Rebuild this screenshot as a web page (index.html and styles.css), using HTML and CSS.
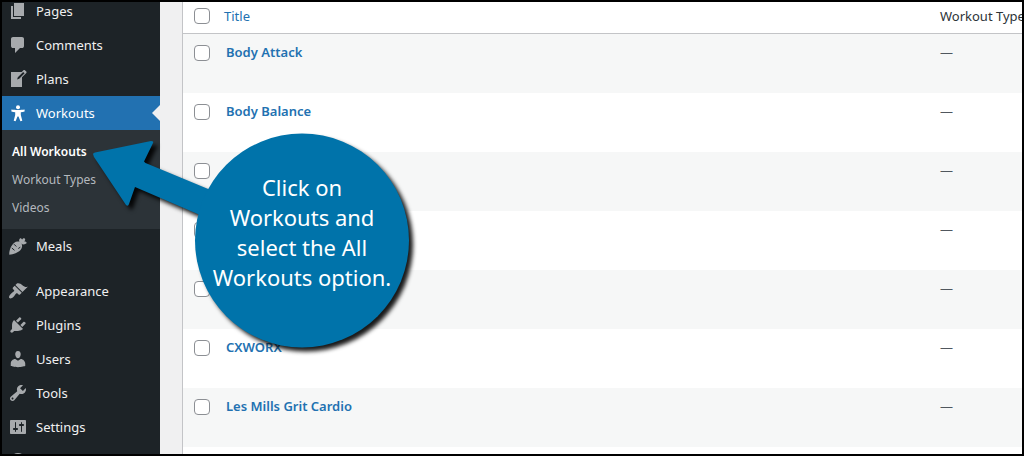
FILE: index.html
```html
<!DOCTYPE html>
<html lang="en">

<head>
    <meta charset="UTF-8">
    <title>Workouts</title>
    <link rel="stylesheet" href="styles.css">
</head>

<body>
    <nav class="sidebar">
        <ul class="menu">
            <li><a href="#"><svg class="icon" viewBox="0 0 20 20"><path d="M6 15V2h10v13H6zm-1 1h8v2H3V5h2v11z"/></svg>Pages</a></li>
            <li><a href="#"><svg class="icon" viewBox="0 0 20 20"><path d="M5 2h9q.82 0 1.41.59T16 4v7q0 .82-.59 1.41T14 13h-2l-5 5v-5H5q-.82 0-1.41-.59T3 11V4q0-.82.59-1.41T5 2z"/></svg>Comments</a></li>
            <li><a href="#"><svg class="icon" viewBox="0 0 20 20"><path d="M16.890 1.200l1.410 1.410c.39.39.39 1.020 0 1.410L14 8.330V18H3V3h10.670l1.800-1.800c.4-.39 1.030-.4 1.420 0zm-5.660 8.480l5.370-5.360-1.420-1.420-5.360 5.370-.71 2.120z"/></svg>Plans</a></li>
            <li>
                <a class="current" href="#"><svg class="icon" viewBox="0 0 20 20"><circle cx="10" cy="4.300" r="2"/><path d="M3.400 6.600c2 .3 4 .4 6.600.4s4.600-.1 6.600-.4v2c-1.300.3-2.600.5-3.800.7v2.600l1.500 5.900-1.900.4L10.500 13.500h-1l-1.900 4.700-1.900-.4 1.500-5.900V9.300C6 9.100 4.700 8.900 3.400 8.600z"/></svg>Workouts</a>
                <ul class="submenu">
                    <li><a class="selected" href="#">All Workouts</a></li>
                    <li><a href="#">Workout Types</a></li>
                    <li><a href="#">Videos</a></li>
                </ul>
            </li>
            <li><a href="#"><svg class="icon" viewBox="0 0 20 20"><path d="M1.300 18.700C1 14.500 3.200 9.200 6 7c2.300-1.900 5.300-1.900 7 0s1.500 4.900-.5 7c-2.400 2.500-7 4.600-11.200 4.700z"/><path d="M11.800 6.600c-1-1.500-.9-3.400.3-4.400 1-.1 1.800.5 2 1.500.5-1.300 1.600-1.900 2.600-1.200.8.700.6 1.900-.4 2.900 1.300-.1 2.300.5 2.500 1.700-1.400 1.500-4 1.600-5.500.7z"/><path class="cut" d="M6 8.200l2.300 2.300M12.300 11.200l-2 1.300M3.800 12l2.700 2.300"/></svg>Meals</a></li>
            <li class="separator"></li>
            <li><a href="#"><svg class="icon" viewBox="0 0 20 20"><path d="M14.480 11.060L7.410 3.990l1.500-1.500c.5-.56 2.300-.47 3.510.32 1.210.8 1.430 1.280 2.910 2.100 1.180.64 2.450 1.260 4.450.85zm-.71.71L6.700 4.700 4.930 6.470c-.39.39-.39 1.020 0 1.410l1.060 1.060c.39.39.39 1.030 0 1.420-.6.6-1.430 1.110-2.210 1.690-.35.26-.7.53-1.010.84C1.430 14.230.4 16.080 1.400 17.070c.99 1 2.840-.03 4.180-1.360.31-.31.58-.66.85-1.020.57-.78 1.080-1.610 1.690-2.210.39-.39 1.020-.39 1.410 0l1.060 1.060c.39.39 1.020.39 1.410 0z"/></svg>Appearance</a></li>
            <li><a href="#"><svg class="icon" viewBox="0 0 20 20"><path d="M13.110 4.360L9.870 7.600 8 5.730l3.240-3.240c.35-.34 1.050-.2 1.560.32.52.51.66 1.210.31 1.550zm-8 1.770l.91-1.120 9.010 9.010-1.190.84c-.71.71-2.630 1.160-3.820 1.160H6.140L4.900 17.260c-.59.59-1.540.59-2.120 0-.59-.58-.59-1.530 0-2.120l1.240-1.240v-3.880c0-1.130.4-3.190 1.090-3.890zm7.260 3.970l3.240-3.240c.34-.35 1.040-.21 1.550.31.52.51.66 1.210.31 1.550l-3.240 3.250z"/></svg>Plugins</a></li>
            <li><a href="#"><svg class="icon" viewBox="0 0 20 20"><path d="M10 9.250c-2.270 0-2.730-3.440-2.730-3.440C7 4.020 7.820 2 9.970 2c2.160 0 2.980 2.020 2.710 3.810 0 0-.41 3.440-2.680 3.440zm0 2.570L12.720 10c2.390 0 4.520 2.330 4.520 4.530v2.490s-3.650 1.130-7.240 1.130c-3.650 0-7.240-1.130-7.240-1.130v-2.490c0-2.250 1.940-4.480 4.470-4.480z"/></svg>Users</a></li>
            <li><a href="#"><svg class="icon" viewBox="0 0 20 20"><path d="M16.680 9.770c-1.340 1.340-3.300 1.670-4.950.99l-5.410 6.520c-.99.99-2.590.99-3.580 0s-.99-2.590 0-3.570l6.520-5.420c-.68-1.650-.35-3.610.99-4.950 1.280-1.280 3.120-1.620 4.720-1.060l-2.890 2.890 2.820 2.820 2.860-2.870c.53 1.580.18 3.390-1.080 4.650zM3.810 16.210c.4.39 1.040.39 1.430 0 .4-.4.4-1.040 0-1.430-.39-.4-1.030-.4-1.430 0-.39.39-.39 1.030 0 1.430z"/></svg>Tools</a></li>
            <li><a href="#"><svg class="icon" viewBox="0 0 20 20"><path d="M18 16V4c0-.55-.45-1-1-1H3c-.55 0-1 .45-1 1v12c0 .55.45 1 1 1h14c.55 0 1-.45 1-1zM8 11h1c.55 0 1 .45 1 1s-.45 1-1 1H8v1.500c0 .28-.22.5-.5.5s-.5-.22-.5-.5V13H6c-.55 0-1-.45-1-1s.45-1 1-1h1V5.500c0-.28.22-.5.5-.5s.5.22.5.5V11zm5-2h-1c-.55 0-1-.45-1-1s.45-1 1-1h1V5.500c0-.28.22-.5.5-.5s.5.22.5.5V7h1c.55 0 1 .45 1 1s-.45 1-1 1h-1v5.500c0 .28-.22.5-.5.5s-.5-.22-.5-.5V9z"/></svg>Settings</a></li>
            <li><a href="#" aria-label="More"><svg class="icon" viewBox="0 0 20 20"><circle cx="10" cy="10" r="8"/></svg></a></li>
        </ul>
    </nav>

    <main class="content">
        <table class="list">
            <thead>
                <tr>
                    <th class="check"><input type="checkbox" aria-label="Select all"></th>
                    <th class="heading"><a href="#">Title</a></th>
                    <th class="types">Workout Types</th>
                </tr>
            </thead>
            <tbody>
                <tr>
                    <td class="check"><input type="checkbox" id="w1"></td>
                    <td class="name"><label for="w1"><a href="#">Body Attack</a></label></td>
                    <td class="types">—</td>
                </tr>
                <tr>
                    <td class="check"><input type="checkbox" id="w2"></td>
                    <td class="name"><label for="w2"><a href="#">Body Balance</a></label></td>
                    <td class="types">—</td>
                </tr>
                <tr>
                    <td class="check"><input type="checkbox" aria-label="Select workout"></td>
                    <td class="name"></td>
                    <td class="types">—</td>
                </tr>
                <tr>
                    <td class="check"><input type="checkbox" aria-label="Select workout"></td>
                    <td class="name"></td>
                    <td class="types">—</td>
                </tr>
                <tr>
                    <td class="check"><input type="checkbox" aria-label="Select workout"></td>
                    <td class="name"></td>
                    <td class="types">—</td>
                </tr>
                <tr>
                    <td class="check"><input type="checkbox" id="w6"></td>
                    <td class="name"><label for="w6"><a href="#">CXWORX</a></label></td>
                    <td class="types">—</td>
                </tr>
                <tr>
                    <td class="check"><input type="checkbox" id="w7"></td>
                    <td class="name"><label for="w7"><a href="#">Les Mills Grit Cardio</a></label></td>
                    <td class="types">—</td>
                </tr>
            </tbody>
        </table>
    </main>

    <!-- help bubble pointing at All Workouts -->
    <div class="callout">
        <svg class="bubble" viewBox="0 0 330 230">
            <path d="M3 30q0-1 2-1.500L61 17q3 0 2 2l-9 18.500q1 1.500 4 2.500l65 27-13 24-65-28-6 17q-1 3-3 1L4 33z"/>
            <circle cx="212" cy="116.500" r="107"/>
        </svg>
        <p class="tip">Click on<br>Workouts and<br>select the All<br>Workouts option.</p>
    </div>
</body>

</html>
```
FILE: styles.css
```css
* {
    box-sizing: border-box;
}

body {
    position: relative;
    display: flex;
    height: 100vh;
    margin: 0;
    border: 2px solid black;
    overflow: hidden;
    background-color: #f0f0f1;
    font-family: "Noto Sans", "Open Sans", sans-serif;
    font-size: 13px;
    line-height: 18px;
}

a {
    color: #2271b1;
    text-decoration: none;
}

ul {
    margin: 0;
    padding: 0;
    list-style: none;
}

.sidebar {
    flex: none;
    width: 158px;
    background-color: #1d2327;
}

/* the menu is scrolled a little */
.menu {
    margin-top: -8px;
}

.menu > li > a {
    display: flex;
    align-items: center;
    gap: 8px;
    height: 34px;
    padding-left: 6px;
    color: #f0f0f1;
}

.icon {
    width: 20px;
    height: 20px;
    fill: #a7aaad;
}

.cut {
    fill: none;
    stroke: #1d2327;
}

.menu > li > .current {
    position: relative;
    background-color: #2271b1;
    color: white;
}

.current .icon {
    fill: white;
}

.current::after {
    content: "";
    position: absolute;
    right: 0;
    border: 8px solid transparent;
    border-right-color: #f0f0f1;
}

.submenu {
    padding: 8px 0 7px;
    background-color: #2c3338;
}

.submenu a {
    display: block;
    padding: 5px 10px;
    color: #b4b9be;
    font-size: 12px;
}

.submenu .selected {
    color: white;
    font-weight: 600;
}

.separator {
    height: 11px;
}

.content {
    flex: 1;
    min-width: 0;
    margin-left: 22px;
    border-left: 1px solid #c3c4c7;
    background-color: white;
}

.list {
    width: 100%;
    table-layout: fixed;
    border-collapse: separate;
    border-spacing: 0;
}

th {
    height: 32px;
    padding: 0 0 3px;
    border-bottom: 1px solid #c3c4c7;
    font-weight: 400;
    text-align: left;
    color: #2c3338;
}

td {
    height: 59px;
    padding: 9px 0 0;
    vertical-align: top;
    color: #50575e;
}

tbody tr:nth-child(odd) {
    background-color: #f6f7f7;
}

.check {
    width: 41px;
    padding-left: 11px;
}

td.check {
    padding-top: 11px;
}

.name {
    padding-left: 2px;
    font-weight: 600;
}

.types {
    width: 82px;
    white-space: nowrap;
}

input {
    appearance: none;
    display: block;
    width: 16px;
    height: 16px;
    margin: 0;
    border: 1px solid #8c8f94;
    border-radius: 4px;
    background-color: white;
}

.callout {
    position: absolute;
    left: 88px;
    top: 122px;
    width: 330px;
}

.bubble {
    display: block;
    overflow: visible;
    fill: #0073aa;
    filter: drop-shadow(4px 4px 2px rgba(0, 0, 0, 0.9));
}

.tip {
    position: absolute;
    left: 105px;
    top: 48px;
    width: 214px;
    margin: 0;
    color: white;
    font-size: 22px;
    line-height: 30px;
    text-align: center;
}
```
